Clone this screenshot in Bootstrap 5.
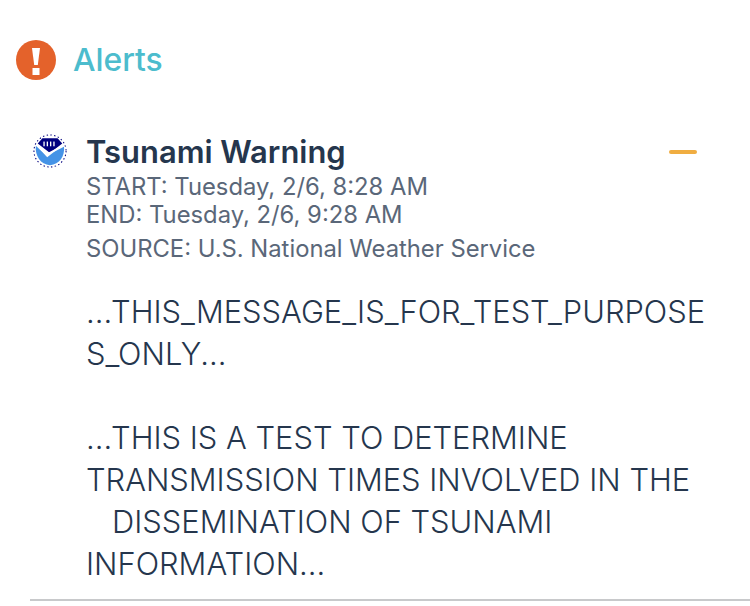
<!doctype html>
<html lang="en">
<head>
<meta charset="utf-8">
<title>Alerts</title>
<link rel="stylesheet" href="https://cdn.jsdelivr.net/npm/bootstrap@5.3.0/dist/css/bootstrap.min.css">
<style>
html,body{height:100%;overflow:hidden;background:#fff}
body{font-family:Inter,"Noto Sans",sans-serif;color:#25364d}
.hdr{padding:40px 16px 0;height:109px;gap:17px}
.hdr-ico{width:40px;height:40px;flex:none}
.hdr-title{font-size:31.8px;line-height:40px;font-weight:500;color:#4cbccd}
.entry{margin:0 0 0 30px;padding-right:53px;border-bottom:2px solid #c8c9cb;height:492px}
.logo{width:34px;height:34px;flex:none;margin:25px 0 0 3px}
.info{padding-left:19px;min-width:0;flex:1}
.ttl{font-size:30.9px;line-height:36px;font-weight:600;margin-top:25px;color:#25364d}
.meta{font-size:23.8px;line-height:28px;color:#5a6779}
.meta-first{margin-top:3px}
.meta-src{margin-top:6px}
.dash{width:28px;height:4px;background:#f0ad41;border-radius:2px;margin-top:41px;flex:none}
.msg{margin:28px 0 0 56px;font-size:30.85px;line-height:42px;font-weight:350;white-space:pre-wrap;word-break:break-all;overflow-wrap:anywhere;width:622px}
</style>
</head>
<body>
<div class="hdr d-flex align-items-start">
<svg class="hdr-ico" viewBox="0 0 40 40"><circle cx="20" cy="20" r="20" fill="#e4622b"/><path d="M16 8h8l-2.200 17h-3.600z" fill="#fff"/><rect x="16.500" y="28" width="7" height="7" fill="#fff"/></svg>
<div class="hdr-title">Alerts</div>
</div>
<div class="entry">
<div class="d-flex align-items-start">
<svg class="logo" viewBox="0 0 36 36"><circle cx="18" cy="18" r="17" fill="#fff" stroke="#00007f" stroke-width="1.100" stroke-dasharray="1.500 2.500"/><path d="M10 4.500H26L31 10 18 20 5 10z" fill="#00007f"/><path d="M3 12.500 14 23 32.800 13.500C34 23 28 32.500 18 33 8 32.500 2 23 3 12.500z" fill="#4593e6"/><path d="M3.500 11 14 21 32 11.500 15 24.500z" fill="#fff"/><g fill="#fff"><rect x="11" y="8" width="1.400" height="5"/><rect x="14.500" y="8" width="1.400" height="5"/><rect x="18" y="8" width="1.400" height="5"/><rect x="21.500" y="8" width="1.400" height="5"/></g></svg>
<div class="info">
<div class="ttl">Tsunami Warning</div>
<div class="meta meta-first">START: Tuesday, 2/6, 8:28 AM</div>
<div class="meta">END: Tuesday, 2/6, 9:28 AM</div>
<div class="meta meta-src">SOURCE: U.S. National Weather Service</div>
</div>
<div class="dash"></div>
</div>
<div class="msg">...THIS_MESSAGE_IS_FOR_TEST_PURPOSE S_ONLY...

...THIS IS A TEST TO DETERMINE
TRANSMISSION TIMES INVOLVED IN THE
   DISSEMINATION OF TSUNAMI
INFORMATION...</div>
</div>
<script src="https://cdn.jsdelivr.net/npm/bootstrap@5.3.0/dist/js/bootstrap.bundle.min.js"></script>
</body>
</html>
